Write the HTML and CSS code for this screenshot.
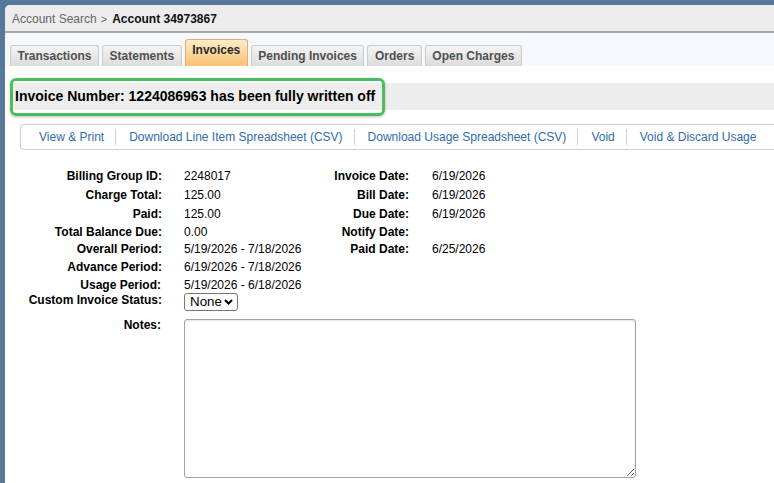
FILE: index.html
```html
<!DOCTYPE html>
<html>
<head>
<meta charset="utf-8">
<link rel="stylesheet" href="styles.css">
</head>
<body>
<div class="panel">
  <div class="crumb">
    <span class="crumb-link">Account Search</span>
    <span class="crumb-sep">&gt;</span>
    <span class="crumb-current">Account 34973867</span>
  </div>
  <div class="tabs">
    <div class="tab">Transactions</div>
    <div class="tab">Statements</div>
    <div class="tab active">Invoices</div>
    <div class="tab">Pending Invoices</div>
    <div class="tab">Orders</div>
    <div class="tab">Open Charges</div>
  </div>
  <div class="message">
    <span class="message-text">Invoice Number: 1224086963 has been fully written off</span>
    <div class="highlight"></div>
  </div>
  <div class="actions">
    <a class="action">View &amp; Print</a>
    <span class="sep"></span>
    <a class="action">Download Line Item Spreadsheet (CSV)</a>
    <span class="sep"></span>
    <a class="action">Download Usage Spreadsheet (CSV)</a>
    <span class="sep"></span>
    <a class="action">Void</a>
    <span class="sep"></span>
    <a class="action">Void &amp; Discard Usage</a>
  </div>
  <div class="details">
    <div class="lbl">Billing Group ID:</div><div class="val">2248017</div>
    <div class="lbl">Invoice Date:</div><div class="val">6/19/2026</div>

    <div class="lbl">Charge Total:</div><div class="val">125.00</div>
    <div class="lbl">Bill Date:</div><div class="val">6/19/2026</div>

    <div class="lbl">Paid:</div><div class="val">125.00</div>
    <div class="lbl">Due Date:</div><div class="val">6/19/2026</div>

    <div class="lbl">Total Balance Due:</div><div class="val">0.00</div>
    <div class="lbl">Notify Date:</div><div class="val"></div>

    <div class="lbl">Overall Period:</div><div class="val">5/19/2026 - 7/18/2026</div>
    <div class="lbl">Paid Date:</div><div class="val">6/25/2026</div>

    <div class="lbl">Advance Period:</div><div class="val wide">6/19/2026 - 7/18/2026</div>

    <div class="lbl">Usage Period:</div><div class="val wide">5/19/2026 - 6/18/2026</div>

    <div class="lbl top">Custom Invoice Status:</div>
    <div class="val wide top">
      <select class="status"><option>None</option></select>
    </div>

    <div class="lbl top notes-lbl">Notes:</div>
    <div class="val wide top">
      <textarea class="notes"></textarea>
    </div>
  </div>
</div>
</body>
</html>
```
FILE: styles.css
```css
html, body {
  margin: 0;
  padding: 0;
}
body {
  background: #58789b;
  font-family: "Liberation Sans", Arial, sans-serif;
  font-size: 12px;
  color: #000;
  width: 774px;
  height: 483px;
  overflow: hidden;
}
.panel {
  margin: 5px 0 0 5px;
  background: #fff;
  height: 478px;
  border-top-left-radius: 5px;
  overflow: hidden;
}
.crumb {
  height: 28px;
  box-sizing: border-box;
  padding-top: 1px;
  background: #ececec;
  border-bottom: 2px solid #a9a9a9;
  display: flex;
  align-items: center;
  padding-left: 7px;
  font-size: 12px;
}
.crumb-link {
  color: #666;
}
.crumb-sep {
  color: #666;
  font-size: 11px;
  margin: 0 5px 0 4px;
}
.crumb-current {
  font-weight: bold;
  color: #111;
}
.tabs {
  height: 33px;
  box-sizing: border-box;
  background: #f5f9fd;
  display: flex;
  align-items: flex-end;
  gap: 3px;
  padding-left: 5px;
}
.tab {
  height: 21px;
  box-sizing: border-box;
  padding: 0 6.5px;
  border: 1px solid #cacaca;
  border-bottom: none;
  border-radius: 3px 3px 0 0;
  background: linear-gradient(#f4f4f4, #dcdcdc);
  color: #505050;
  font-weight: bold;
  font-size: 12px;
  line-height: 20px;
}
.tab.active {
  height: 27px;
  border-color: #d8b277;
  background: linear-gradient(#fdecc8, #f8c271);
  color: #2a2a2a;
  line-height: 21px;
}
.message {
  position: relative;
  margin: 17px 0 0 5px;
  height: 27px;
  background: #ededed;
  padding-left: 5px;
  font-weight: bold;
  font-size: 14px;
  line-height: 27px;
  color: #000;
}
.highlight {
  position: absolute;
  left: 0;
  top: -5px;
  width: 375px;
  height: 38px;
  box-sizing: border-box;
  border: 3px solid #4cbc5e;
  border-radius: 6px;
  box-shadow: 0 1px 3px rgba(0, 0, 0, 0.25);
}
.actions {
  margin: 14px 0 0 15px;
  height: 26px;
  box-sizing: border-box;
  border: 1px solid #cfcfcf;
  border-right: none;
  border-radius: 4px 0 0 4px;
  display: flex;
  align-items: center;
  padding-left: 5px;
}
.action {
  color: #2f6bad;
  font-size: 12px;
  padding: 0 11px 0 13px;
  white-space: nowrap;
}
.sep {
  width: 1px;
  height: 16px;
  background: #cfcfcf;
}
.details {
  margin: 16px 0 0 15px;
  display: grid;
  grid-template-columns: 164px 125px 123px auto;
  grid-template-rows: 19px 19px 19px 17px 18px 18px 17px 21px auto;
  align-items: center;
}
.lbl {
  text-align: right;
  padding-right: 22px;
  font-weight: bold;
  line-height: 14px;
  white-space: nowrap;
}
.details .lbl:nth-child(4n+3) {
  padding-right: 23px;
}
.val {
  line-height: 14px;
  white-space: nowrap;
}
.val.wide {
  grid-column: 2 / 5;
}
.top {
  align-self: start;
}
.lbl.notes-lbl {
  padding-top: 4px;
}
.status {
  appearance: none;
  -webkit-appearance: none;
  width: 54px;
  height: 18px;
  box-sizing: border-box;
  border: 1px solid #767676;
  border-radius: 3px;
  background: #fff url("data:image/svg+xml;utf8,<svg xmlns='http://www.w3.org/2000/svg' width='9' height='6' viewBox='0 0 9 6'><path d='M1 1 L4.5 4.5 L8 1' fill='none' stroke='black' stroke-width='2'/></svg>") no-repeat right 4px center;
  font-family: "Liberation Sans", Arial, sans-serif;
  font-size: 13.33px;
  color: #000;
  padding: 0 0 0 5px;
  line-height: 16px;
}
.notes {
  display: block;
  margin-top: 5px;
  width: 452px;
  height: 159px;
  box-sizing: border-box;
  border: 1px solid #a3a3a3;
  border-radius: 3px;
  box-shadow: inset 0 1px 2px rgba(0, 0, 0, 0.12);
  resize: both;
  font-family: "Liberation Sans", Arial, sans-serif;
}
```
